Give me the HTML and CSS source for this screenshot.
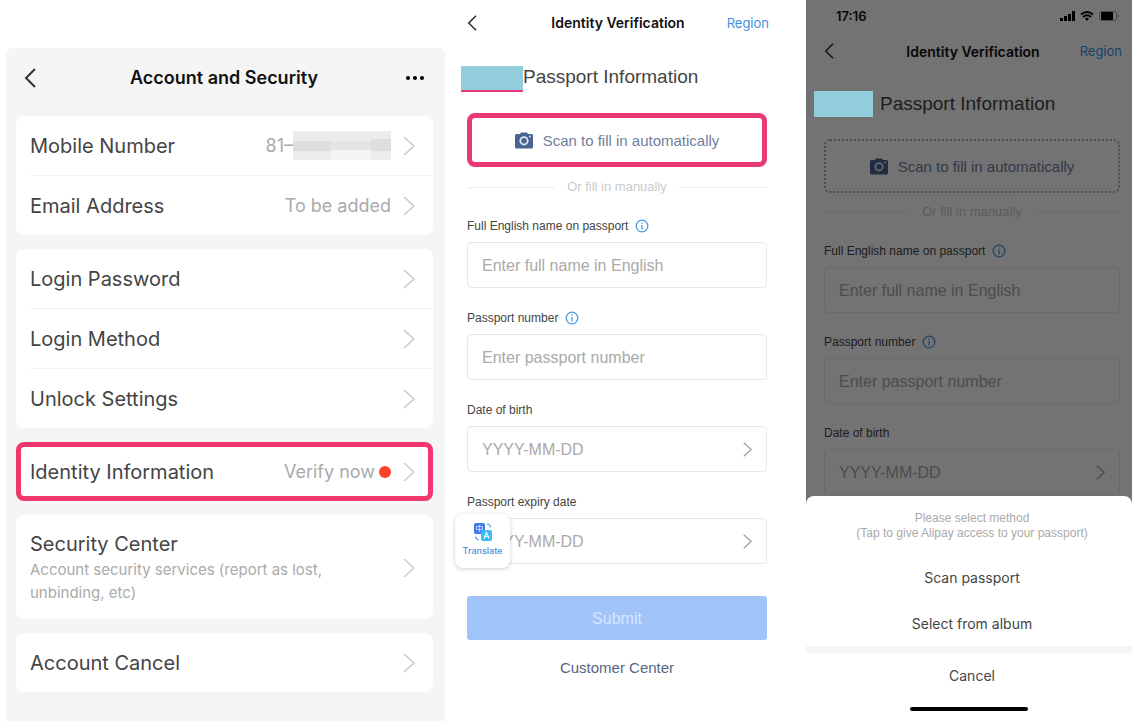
FILE: index.html
```html
<!DOCTYPE html>
<html lang="en">
<head>
    <meta charset="UTF-8">
    <meta name="viewport" content="width=device-width, initial-scale=1.0">
    <title>Identity Verification</title>
    <link rel="stylesheet" href="styles.css">
</head>
<body>
    <!-- shared icons -->
    <svg class="sprite" aria-hidden="true">
        <symbol id="back" viewBox="0 0 12 20"><path d="M11 1 2 10l9 9" fill="none" stroke="currentColor" stroke-width="2"/></symbol>
        <symbol id="next" viewBox="0 0 12 20"><path d="m1 1 10 9-10 9" fill="none" stroke="currentColor" stroke-width="1.5"/></symbol>
        <symbol id="camera" viewBox="0 0 18 17">
            <path d="M5 2 6 .5h6L13 2h3.500Q18 2 18 3.500v11.500q0 1.500-1.500 1.500h-15Q0 16.500 0 15V3.500Q0 2 1.500 2z" fill="#48648f"/>
            <circle cx="9" cy="8.800" r="3.700" fill="none" stroke="#dfe8f5" stroke-width="1.800"/>
            <circle cx="15" cy="4.500" r="1" fill="#dfe8f5"/>
        </symbol>
        <symbol id="info" viewBox="0 0 14 14">
            <circle cx="7" cy="7" r="5.800" fill="none" stroke="#4b97e4" stroke-width="1.300"/>
            <path d="M7 3.500v1.300M7 6v4.500" stroke="#4b97e4" stroke-width="1.300"/>
        </symbol>
    </svg>

    <main class="screens">
        <section class="account">
            <header class="bar">
                <button class="icon-btn" aria-label="Back"><svg class="back"><use href="#back"/></svg></button>
                <h1>Account and Security</h1>
                <button class="icon-btn more" aria-label="More"><svg viewBox="0 0 18 4"><circle cx="2" cy="2" r="2"/><circle cx="9" cy="2" r="2"/><circle cx="16" cy="2" r="2"/></svg></button>
            </header>

            <div class="card">
                <a class="row" href="#">
                    <span class="name">Mobile Number</span>
                    <span class="value">81–</span>
                    <svg class="mosaic" viewBox="0 0 98 29" preserveAspectRatio="none">
                        <path fill="#ececec" d="M0 0h98v29H0z"/>
                        <path fill="#dedede" d="M0 10h38v10H0zM78 8h20v12H78z"/>
                        <path fill="#e4e4e4" d="M38 10h40v9H38z"/>
                        <path fill="#f4f4f4" d="M38 19h40v10H38z"/>
                    </svg>
                    <svg class="next"><use href="#next"/></svg>
                </a>
                <a class="row" href="#">
                    <span class="name">Email Address</span>
                    <span class="value">To be added</span>
                    <svg class="next"><use href="#next"/></svg>
                </a>
            </div>

            <div class="card">
                <a class="row" href="#"><span class="name">Login Password</span><svg class="next"><use href="#next"/></svg></a>
                <a class="row" href="#"><span class="name">Login Method</span><svg class="next"><use href="#next"/></svg></a>
                <a class="row" href="#"><span class="name">Unlock Settings</span><svg class="next"><use href="#next"/></svg></a>
            </div>

            <div class="card marked">
                <a class="row" href="#">
                    <span class="name">Identity Information</span>
                    <span class="value">Verify now</span>
                    <i class="dot"></i>
                    <svg class="next"><use href="#next"/></svg>
                </a>
            </div>

            <div class="card">
                <a class="row tall" href="#">
                    <span class="name">Security Center<small>Account security services (report as lost, unbinding, etc)</small></span>
                    <svg class="next"><use href="#next"/></svg>
                </a>
            </div>

            <div class="card">
                <a class="row" href="#"><span class="name">Account Cancel</span><svg class="next"><use href="#next"/></svg></a>
            </div>
        </section>

        <section class="verify">
            <header class="bar">
                <button class="icon-btn" aria-label="Back"><svg class="back"><use href="#back"/></svg></button>
                <h1>Identity Verification</h1>
                <a class="region" href="#">Region</a>
            </header>
            <h2><span class="cover underlined"></span>Passport Information</h2>
            <button class="scan marked"><svg><use href="#camera"/></svg>Scan to fill in automatically</button>
            <p class="divider">Or fill in manually</p>
            <form>
                <div class="field">
                    <label for="name">Full English name on passport <svg><use href="#info"/></svg></label>
                    <div class="box"><input type="text" id="name" placeholder="Enter full name in English"></div>
                </div>
                <div class="field">
                    <label for="number">Passport number <svg><use href="#info"/></svg></label>
                    <div class="box"><input type="text" id="number" placeholder="Enter passport number"></div>
                </div>
                <div class="field">
                    <label for="birth">Date of birth</label>
                    <div class="box"><input type="text" id="birth" placeholder="YYYY-MM-DD"><svg class="next"><use href="#next"/></svg></div>
                </div>
                <div class="field">
                    <label for="expiry">Passport expiry date</label>
                    <div class="box"><input type="text" id="expiry" placeholder="YYYY-MM-DD"><svg class="next"><use href="#next"/></svg></div>
                    <button type="button" class="translate">
                        <svg viewBox="0 0 18 18">
                            <rect x="0" y="0" width="11" height="11" rx="2" fill="#4378ee"/>
                            <path d="M2.500 3.500h6v3h-6zM5.500 2v7" fill="none" stroke="#b9d0ff"/>
                            <rect x="7" y="7" width="11" height="11" rx="2" fill="#37bdf3"/>
                            <path d="m10 15.500 2.500-6 2.500 6M11 13.500h3" fill="none" stroke="#fff" stroke-width="1.200"/>
                            <path d="M13 1q3 0 3.500 3.500M1.500 13.500Q2 16.500 5 17" fill="none" stroke="#4f8edb" stroke-width="1.200"/>
                        </svg>
                        Translate
                    </button>
                </div>
                <button type="button" class="submit">Submit</button>
            </form>
            <a class="customer" href="#">Customer Center</a>
        </section>

        <section class="verify dimmed">
            <div class="status">
                <span>17:16</span>
                <svg viewBox="0 0 60 12">
                    <path d="M0 8h3v3H0zM4 6h3v5H4zM8 4h3v7H8zM12 1h3v10h-3z"/>
                    <path d="M21 4.500q6-5 12 0M23 7q4-3.500 8 0" fill="none" stroke="#000" stroke-width="2"/>
                    <path d="m27 11-2-2.500q2-1.500 4 0z"/>
                    <rect x="39.500" y="1.500" width="17" height="9" rx="2" fill="none" stroke="#aaa"/>
                    <rect x="41" y="2" width="12" height="8" rx="1"/>
                    <path d="M58 4.500v3" stroke="#aaa"/>
                </svg>
            </div>
            <header class="bar">
                <button class="icon-btn" aria-label="Back"><svg class="back"><use href="#back"/></svg></button>
                <h1>Identity Verification</h1>
                <a class="region" href="#">Region</a>
            </header>
            <h2><span class="cover"></span>Passport Information</h2>
            <button class="scan"><svg><use href="#camera"/></svg>Scan to fill in automatically</button>
            <p class="divider">Or fill in manually</p>
            <form>
                <div class="field">
                    <label for="name2">Full English name on passport <svg><use href="#info"/></svg></label>
                    <div class="box"><input type="text" id="name2" placeholder="Enter full name in English"></div>
                </div>
                <div class="field">
                    <label for="number2">Passport number <svg><use href="#info"/></svg></label>
                    <div class="box"><input type="text" id="number2" placeholder="Enter passport number"></div>
                </div>
                <div class="field">
                    <label for="birth2">Date of birth</label>
                    <div class="box"><input type="text" id="birth2" placeholder="YYYY-MM-DD"><svg class="next"><use href="#next"/></svg></div>
                </div>
            </form>
            <div class="overlay"></div>
            <div class="sheet">
                <p>Please select method<br>(Tap to give Alipay access to your passport)</p>
                <button>Scan passport</button>
                <button>Select from album</button>
                <button class="cancel">Cancel</button>
                <div class="home"></div>
            </div>
        </section>
    </main>
</body>
</html>
```

FILE: styles.css
```css
* {
    box-sizing: border-box;
}
body {
    margin: 0;
    background-color: #fff;
    font-family: Inter, "Liberation Sans", sans-serif;
    color: #444;
}
h1, h2, p {
    margin: 0;
}
a {
    color: inherit;
    text-decoration: none;
}
button {
    font-family: inherit;
    padding: 0;
    border: 0;
    background: none;
    cursor: pointer;
}
svg {
    display: block;
    flex: none;
}
.sprite {
    position: absolute;
    width: 0;
    height: 0;
}
.screens {
    display: grid;
    grid-template-columns: 439fr 361fr 326fr;
    min-height: 100vh;
    padding-left: 6px;
}

/* header bar */
.bar {
    display: grid;
    grid-template-columns: 60px 1fr 60px;
    align-items: center;
}
.bar h1 {
    text-align: center;
    white-space: nowrap;
    color: #111;
    font-weight: 600;
}
.icon-btn {
    justify-self: start;
    color: #333;
}
.back {
    width: 12px;
    height: 20px;
}
.next {
    width: 12px;
    height: 20px;
    color: #c8c8c8;
}

/* account screen */
.account {
    margin-top: 48px;
    padding: 0 12px 0 10px;
    background-color: #f5f5f5;
    border-radius: 6px 6px 0 0;
}
.account .bar {
    height: 59px;
    padding: 0 9px 0 8px;
    margin-bottom: 9px;
}
.account h1 {
    font-size: 18px;
}
.more {
    justify-self: end;
}
.more svg {
    width: 18px;
    height: 4px;
}
.card {
    margin-bottom: 14px;
    background-color: #fff;
    border-radius: 8px;
}
.row {
    display: flex;
    align-items: center;
    height: 59px;
    padding-right: 18px;
    margin-left: 14px;
}
.row + .row {
    height: 60px;
    border-top: 1px solid #f1f1f1;
}
.name {
    flex: 1;
    font-size: 20px;
}
.name small {
    display: block;
    max-width: 310px;
    margin-top: 2px;
    font-size: 15px;
    line-height: 23px;
    color: #aaa;
}
.value {
    font-size: 18px;
    color: #aaa;
}
.row .next {
    margin-left: 12px;
}
.mosaic {
    width: 98px;
    height: 29px;
}
.dot {
    width: 12px;
    height: 12px;
    margin-left: 4px;
    border-radius: 50%;
    background-color: #f9432a;
}
.card.marked {
    border: 5px solid #f0386f;
}
.card.marked .row {
    height: 49px;
    margin-left: 9px;
    padding-right: 13px;
}
.row.tall {
    height: 104px;
    padding-top: 2px;
}

/* verification screens */
.verify {
    padding: 0 39px 0 22px;
    font-family: "Liberation Sans", Arial, sans-serif;
}
.verify .bar {
    height: 45px;
    margin-right: -2px;
}
.verify h1 {
    font-family: Inter, sans-serif;
    font-size: 14px;
}
.verify .back {
    width: 10px;
    height: 16px;
}
.region {
    justify-self: end;
    font-size: 13px;
    font-family: Inter, sans-serif;
    color: #3d93e3;
}
.verify h2 {
    display: flex;
    height: 26px;
    margin: 21px 0 21px -6px;
    font-size: 19px;
    line-height: 22px;
    font-weight: normal;
    white-space: nowrap;
}
.cover {
    width: 62px;
    background-color: #92cddc;
}
.underlined {
    border-bottom: 2px solid #e6397a;
}
.scan {
    display: flex;
    align-items: center;
    justify-content: center;
    gap: 10px;
    width: 100%;
    height: 54px;
    border: 2px dotted #aaa;
    border-radius: 6px;
    font-size: 15px;
    color: #70809c;
}
.scan svg {
    width: 18px;
    height: 17px;
}
.scan.marked {
    border: 5px solid #ea3a73;
    border-radius: 8px;
}
.divider {
    display: flex;
    align-items: center;
    gap: 12px;
    margin: 12px 0 23px;
    font-size: 13px;
    line-height: 16px;
    color: #ccc;
}
.divider::before, .divider::after {
    content: "";
    flex: 1;
    height: 1px;
    background-color: #eee;
}
.field {
    position: relative;
    margin-bottom: 22px;
}
.field label {
    display: flex;
    align-items: center;
    gap: 7px;
    margin-bottom: 8px;
    font-size: 12px;
    line-height: 16px;
}
.field label svg {
    width: 14px;
    height: 14px;
}
.box {
    display: flex;
    align-items: center;
    height: 46px;
    padding: 0 14px;
    border: 1px solid #e8e8e8;
    border-radius: 4px;
}
.box input {
    flex: 1;
    min-width: 0;
    padding: 2px 0 0;
    border: 0;
    outline: 0;
    background: none;
    font-family: inherit;
    font-size: 16px;
}
.box input::placeholder {
    color: #aaa;
}
.box .next {
    width: 9px;
    height: 15px;
    color: #999;
}
.translate {
    position: absolute;
    left: -12px;
    bottom: -4px;
    display: flex;
    flex-direction: column;
    align-items: center;
    justify-content: center;
    gap: 4px;
    width: 55px;
    height: 54px;
    padding-bottom: 4px;
    background-color: #fff;
    border-radius: 8px;
    box-shadow: 0 1px 4px rgba(0, 0, 0, 0.2);
    font-family: Inter, sans-serif;
    font-size: 9px;
    font-weight: 500;
    color: #4b8fdb;
}
.translate svg {
    width: 18px;
    height: 18px;
}
.submit {
    width: 100%;
    height: 44px;
    padding-top: 2px;
    margin-top: 10px;
    border-radius: 3px;
    background-color: #a1c4f8;
    font-size: 16px;
    color: #d4e6ff;
}
.customer {
    display: block;
    margin-top: 18px;
    text-align: center;
    font-size: 15px;
    line-height: 20px;
    color: #566584;
}

/* third screen, covered by the action sheet */
.dimmed {
    position: relative;
    padding: 0 12px 0 18px;
}
.status {
    display: flex;
    align-items: center;
    justify-content: space-between;
    height: 32px;
    padding-left: 12px;
    font-family: Inter, sans-serif;
    font-size: 13px;
    font-weight: 600;
    color: #111;
}
.status svg {
    width: 60px;
    height: 12px;
}
.dimmed .bar {
    height: 38px;
}
.dimmed h2 {
    gap: 7px;
    margin: 21px 0 22px -10px;
    line-height: 26px;
}
.dimmed .cover {
    position: relative;
    z-index: 2;
    width: 59px;
}
.dimmed .divider {
    margin-top: 11px;
}
.dimmed .field {
    margin-bottom: 21px;
}
.overlay {
    position: absolute;
    inset: 0;
    z-index: 1;
    background-color: rgba(0, 0, 0, 0.55);
}
.sheet {
    position: absolute;
    left: 0;
    right: 0;
    bottom: 0;
    z-index: 3;
    padding: 15px 0 10px;
    background-color: #fff;
    border-radius: 8px 8px 0 0;
    font-family: Inter, sans-serif;
    text-align: center;
}
.sheet p {
    margin-bottom: 13px;
    padding-left: 6px;
    font-family: "Liberation Sans", Arial, sans-serif;
    font-size: 12px;
    line-height: 15px;
    color: #aaa;
}
.sheet button {
    display: block;
    width: 100%;
    height: 46px;
    padding-left: 6px;
    font-size: 14px;
    color: #444;
}
.sheet .cancel {
    height: 51px;
    border-top: 7px solid #f5f5f5;
}
.home {
    width: 118px;
    height: 4px;
    margin: 10px auto 0;
    border-radius: 2px;
    background-color: #000;
}
```
